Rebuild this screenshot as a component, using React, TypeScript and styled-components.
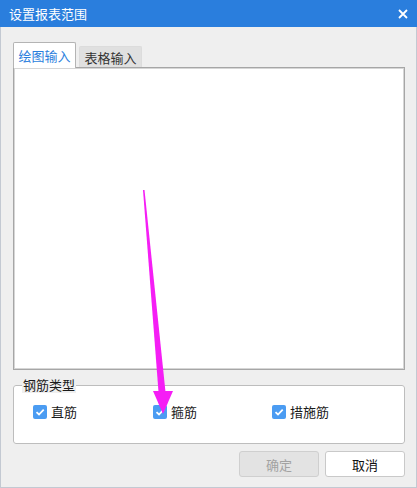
import styled, { createGlobalStyle } from "styled-components";

const GlobalStyle = createGlobalStyle`
  html, body {
    margin: 0;
    padding: 0;
    background: #efefef;
  }
  body {
    font-family: "Noto Sans CJK SC", "Microsoft YaHei", "Liberation Sans", sans-serif;
    font-size: 13px;
    color: #1a1a1a;
  }
`;

const Window = styled.div`
  position: relative;
  width: 417px;
  height: 488px;
  box-sizing: border-box;
  display: flex;
  flex-direction: column;
  background: #efefef;
  border: 1px solid #c3c9d2;
  border-top: none;
`;

const TitleBar = styled.div`
  height: 27px;
  margin: 0 -1px;
  display: flex;
  align-items: center;
  justify-content: space-between;
  padding: 0 9px 0 9px;
  background: #2a7edd;
  color: #ffffff;
  font-size: 13px;
`;

const CloseButton = styled.div`
  width: 10px;
  height: 10px;
  display: flex;
`;

const Body = styled.div`
  flex: 1;
  display: flex;
  flex-direction: column;
  padding: 15px 11px 0 12px;
`;

const TabRow = styled.div`
  display: flex;
  align-items: flex-end;
  gap: 3px;
  height: 25px;
`;

const Tab = styled.div<{ $active?: boolean }>`
  box-sizing: border-box;
  width: 63px;
  height: ${(p) => (p.$active ? 26 : 21)}px;
  margin-bottom: ${(p) => (p.$active ? -1 : 0)}px;
  display: flex;
  align-items: center;
  justify-content: center;
  background: ${(p) => (p.$active ? "#ffffff" : "#e0e0e0")};
  border: 1px solid ${(p) => (p.$active ? "#b4b4b4" : "#dcdcdc")};
  border-bottom: none;
  border-radius: 2px 2px 0 0;
  color: ${(p) => (p.$active ? "#2a7edd" : "#333333")};
  position: relative;
  z-index: ${(p) => (p.$active ? 1 : 0)};
  line-height: 1;
`;

const Canvas = styled.div`
  height: 303px;
  box-sizing: border-box;
  background: #ffffff;
  border: 1px solid #a6a6a6;
  box-shadow: inset 0 0 0 1px #d6d6d6;
`;

const Group = styled.fieldset`
  margin: 7px 0 0 0;
  padding: 11px 0 23px 19px;
  border: 1px solid #bdbdbd;
  border-radius: 3px;
  background: #ffffff;
  min-width: 0;
`;

const Legend = styled.legend`
  margin-left: -11px;
  padding: 0 1px;
  line-height: 16px;
  color: #1a1a1a;
  background: #efefef;
`;

const CheckRow = styled.div`
  display: grid;
  grid-template-columns: 120px 119px 120px;
  align-items: center;
  height: 16px;
`;

const CheckItem = styled.label`
  display: flex;
  align-items: center;
  gap: 4px;
  line-height: 16px;
`;

const Box = styled.span`
  width: 14px;
  height: 14px;
  border-radius: 2px;
  background: #4b9cf2;
  display: flex;
  align-items: center;
  justify-content: center;
`;

const ButtonRow = styled.div`
  display: flex;
  justify-content: flex-end;
  gap: 6px;
  margin-top: 7px;
`;

const Button = styled.button<{ $disabled?: boolean }>`
  width: 80px;
  height: 26px;
  box-sizing: border-box;
  font-family: inherit;
  font-size: 13px;
  border-radius: 3px;
  border: 1px solid ${(p) => (p.$disabled ? "#cfcfcf" : "#c9c9c9")};
  background: ${(p) => (p.$disabled ? "#e3e3e3" : "#ffffff")};
  color: ${(p) => (p.$disabled ? "#a2a2a2" : "#111111")};
  padding: 0;
`;

const Annotation = styled.svg`
  position: absolute;
  left: -1px;
  top: 0;
  pointer-events: none;
`;

const Check = () => (
  <Box>
    <svg width="10" height="8" viewBox="0 0 10 8">
      <path d="M1.5 4.2 L4 6.5 L8.7 1.6" fill="none" stroke="#ffffff" strokeWidth="1.8" />
    </svg>
  </Box>
);

export default function App() {
  return (
    <>
      <GlobalStyle />
      <Window>
        <TitleBar>
          <span>设置报表范围</span>
          <CloseButton>
            <svg width="10" height="10" viewBox="0 0 10 10">
              <path d="M1 1 L9 9 M9 1 L1 9" stroke="#ffffff" strokeWidth="1.8" />
            </svg>
          </CloseButton>
        </TitleBar>
        <Body>
          <TabRow>
            <Tab $active>绘图输入</Tab>
            <Tab>表格输入</Tab>
          </TabRow>
          <Canvas />
          <Group>
            <Legend>钢筋类型</Legend>
            <CheckRow>
              <CheckItem>
                <Check />
                直筋
              </CheckItem>
              <CheckItem>
                <Check />
                箍筋
              </CheckItem>
              <CheckItem>
                <Check />
                措施筋
              </CheckItem>
            </CheckRow>
          </Group>
          <ButtonRow>
            <Button $disabled>确定</Button>
            <Button>取消</Button>
          </ButtonRow>
        </Body>
        <Annotation width="417" height="488" viewBox="0 0 417 488">
          <polygon points="143,190 144.5,190 165.5,392 158.5,392" fill="#f51ef5" />
          <polygon points="153,391 173,391 163,414" fill="#f51ef5" />
        </Annotation>
      </Window>
    </>
  );
}
